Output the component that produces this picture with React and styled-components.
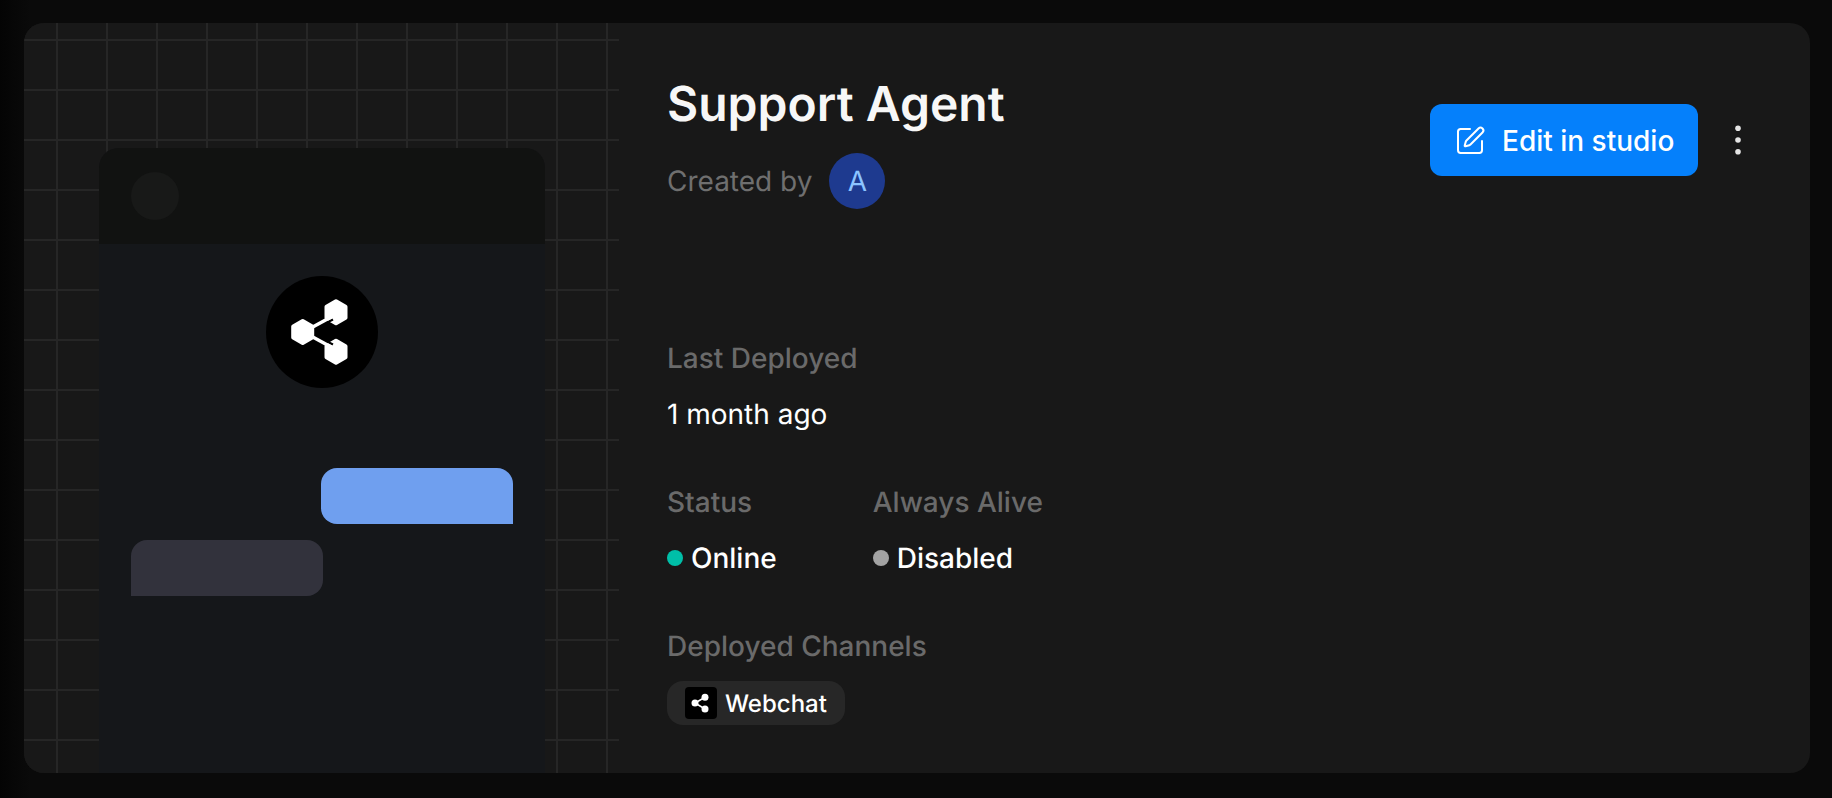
import React from "react";
import styled, { createGlobalStyle } from "styled-components";
import { SquarePen } from "lucide-react";

const GlobalStyle = createGlobalStyle`
  html, body {
    margin: 0;
    padding: 0;
    height: 100%;
    background: #0a0a0a;
  }
  body {
    font-family: Inter, "Liberation Sans", sans-serif;
    text-rendering: geometricPrecision;
  }
`;

const Page = styled.div`
  box-sizing: border-box;
  width: 100%;
  height: 798px;
  overflow: hidden;
  padding: 23px 22px 25px 24px;
  background: linear-gradient(to right, #040404, #0a0a0a 30px);
`;

const Card = styled.div`
  display: flex;
  height: 100%;
  overflow: hidden;
  background: #181818;
  border-radius: 20px;
`;

const Preview = styled.div`
  flex: 0 0 595px;
  box-sizing: border-box;
  padding: 125px 74px 0 75px;
  background-color: #181818;
  background-image:
    linear-gradient(to right, #262626 2px, transparent 2px),
    linear-gradient(to bottom, #262626 2px, transparent 2px);
  background-size: 50px 50px;
  background-position: 32px 16px;
`;

const Phone = styled.div`
  display: flex;
  flex-direction: column;
  height: 100%;
  background: #15171a;
  border-radius: 20px 20px 0 0;
  overflow: hidden;
`;

const PhoneHeader = styled.div`
  display: flex;
  align-items: center;
  flex: 0 0 96px;
  padding: 0 32px;
  background: #111211;
`;

const PhoneAvatar = styled.div`
  width: 48px;
  height: 48px;
  border-radius: 50%;
  background: #181918;
`;

const PhoneBody = styled.div`
  display: flex;
  flex-direction: column;
  padding: 32px;
`;

const BotCircle = styled.div`
  align-self: center;
  width: 112px;
  height: 112px;
  margin-bottom: 80px;
  border-radius: 50%;
  background: #000;
`;

const Bubble = styled.div`
  width: 192px;
  height: 56px;
  align-self: ${(p) => (p.$mine ? "flex-end" : "flex-start")};
  margin-bottom: 16px;
  background: ${(p) => (p.$mine ? "#6f9fef" : "#32323c")};
  border-radius: ${(p) => (p.$mine ? "16px 16px 0 16px" : "16px 16px 16px 0")};
`;

const Details = styled.div`
  flex: 1;
  display: flex;
  flex-direction: column;
  padding: 53px 52px 0 48px;
`;

const TopRow = styled.div`
  display: flex;
  justify-content: space-between;
  align-items: flex-start;
  margin-bottom: 129px;
`;

const Title = styled.h1`
  margin: 0 0 21px;
  font-size: 48px;
  line-height: 56px;
  font-weight: 600;
  color: #f7f7f7;
`;

const CreatedRow = styled.div`
  display: flex;
  align-items: center;
  gap: 17px;
  font-size: 28px;
  color: #6f6f6f;
`;

const Avatar = styled.div`
  display: flex;
  align-items: center;
  justify-content: center;
  width: 56px;
  height: 56px;
  border-radius: 50%;
  background: #1e3a8f;
  color: #8cc4ff;
  font-size: 28px;
`;

const Actions = styled.div`
  display: flex;
  align-items: center;
  gap: 20px;
  margin-top: 28px;
`;

const EditButton = styled.button`
  display: flex;
  align-items: center;
  gap: 16px;
  width: 268px;
  height: 72px;
  padding: 1px 0 0 24px;
  box-sizing: border-box;
  border: none;
  border-radius: 12px;
  background: #0580fb;
  color: #fff;
  font-family: inherit;
  font-size: 28px;
  font-weight: 500;
  white-space: nowrap;
`;

const MenuButton = styled.button`
  display: flex;
  align-items: center;
  justify-content: center;
  width: 40px;
  height: 40px;
  padding: 0;
  border: none;
  background: none;
`;

const Section = styled.div`
  display: flex;
  flex-direction: column;
  gap: ${(p) => p.$gap || 16}px;
  margin-bottom: 48px;
`;

const Row = styled.div`
  display: flex;
  gap: 96px;
`;

const Label = styled.div`
  font-size: 28px;
  line-height: 40px;
  font-weight: 500;
  color: #6a6a6a;
`;

const Value = styled.div`
  display: flex;
  align-items: center;
  gap: 8px;
  font-size: 28px;
  line-height: 40px;
  font-weight: ${(p) => (p.$strong ? 500 : 400)};
  color: #fff;
`;

const Dot = styled.span`
  width: 16px;
  height: 16px;
  border-radius: 50%;
  background: ${(p) => p.$color};
`;

const Pill = styled.div`
  display: flex;
  align-items: center;
  gap: 8px;
  align-self: flex-start;
  height: 44px;
  padding: 0 18px;
  border-radius: 16px;
  background: #272727;
  color: #fff;
  font-size: 24px;
  font-weight: 500;
`;

const ChannelIcon = styled.div`
  width: 32px;
  height: 32px;
  border-radius: 4px;
  background: #000;
`;

const hexagon = (cx, cy) =>
  [
    [cx, cy - 11],
    [cx + 9.5, cy - 5.5],
    [cx + 9.5, cy + 5.5],
    [cx, cy + 11],
    [cx - 9.5, cy + 5.5],
    [cx - 9.5, cy - 5.5],
  ]
    .map((pt) => pt.join(","))
    .join(" ");

const HexShare = () => (
  <svg width="112" height="112" viewBox="0 0 112 112" fill="#fff">
    <g stroke="#fff" strokeWidth="4" strokeLinejoin="round">
      <polygon points={hexagon(70, 36.3)} />
      <polygon points={hexagon(36.7, 56)} />
      <polygon points={hexagon(70, 75.7)} />
    </g>
    <g stroke="#000" strokeWidth="2">
      <path d="M59 47.5 L67 43.5" />
      <path d="M59 64.5 L67 68.5" />
    </g>
    <g stroke="#fff" strokeWidth="3.5">
      <path d="M44 52.5 L66 40.5" />
      <path d="M44 59.5 L66 71.5" />
    </g>
  </svg>
);

const SmallShare = () => (
  <svg width="32" height="32" viewBox="0 0 32 32" fill="#fff">
    <path d="M20 10.3 L10 16 L20 22" fill="none" stroke="#fff" strokeWidth="1.6" />
    <circle cx="20" cy="10.3" r="3.5" />
    <circle cx="10" cy="16" r="3.5" />
    <circle cx="20" cy="22" r="3.5" />
  </svg>
);

const Kebab = () => (
  <svg width="40" height="40" viewBox="0 0 40 40" fill="#e5e5e5">
    <circle cx="20" cy="8.3" r="2.8" />
    <circle cx="20" cy="20" r="2.8" />
    <circle cx="20" cy="31.7" r="2.8" />
  </svg>
);

const App = () => {
  return (
    <Page>
      <GlobalStyle />
      <Card>
        <Preview>
          <Phone>
            <PhoneHeader>
              <PhoneAvatar />
            </PhoneHeader>
            <PhoneBody>
              <BotCircle>
                <HexShare />
              </BotCircle>
              <Bubble $mine />
              <Bubble />
            </PhoneBody>
          </Phone>
        </Preview>

        <Details>
          <TopRow>
            <div>
              <Title>Support Agent</Title>
              <CreatedRow>
                Created by
                <Avatar>A</Avatar>
              </CreatedRow>
            </div>
            <Actions>
              <EditButton>
                <SquarePen size={32} strokeWidth={1.5} />
                Edit in studio
              </EditButton>
              <MenuButton>
                <Kebab />
              </MenuButton>
            </Actions>
          </TopRow>

          <Section>
            <Label>Last Deployed</Label>
            <Value>1 month ago</Value>
          </Section>

          <Row>
            <Section>
              <Label>Status</Label>
              <Value $strong>
                <Dot $color="#00bfa8" />
                Online
              </Value>
            </Section>
            <Section>
              <Label>Always Alive</Label>
              <Value $strong>
                <Dot $color="#a3a3a3" />
                Disabled
              </Value>
            </Section>
          </Row>

          <Section $gap={15}>
            <Label>Deployed Channels</Label>
            <Pill>
              <ChannelIcon>
                <SmallShare />
              </ChannelIcon>
              Webchat
            </Pill>
          </Section>
        </Details>
      </Card>
    </Page>
  );
};

export default App;
